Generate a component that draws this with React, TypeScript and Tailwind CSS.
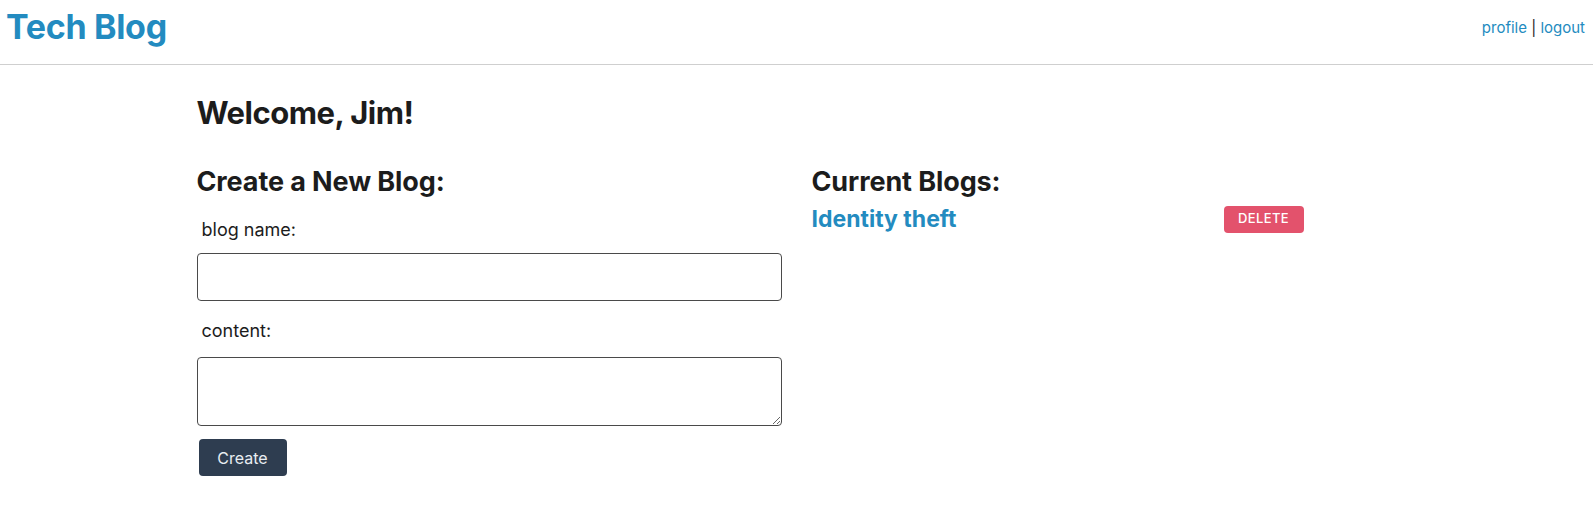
const App = () => {
  return (
    <div className="min-h-screen bg-white text-[#1c1c1c] font-['Inter','Liberation_Sans',sans-serif]">
      <header className="flex h-[65px] items-center justify-between border-b border-[#cfcfcf] px-[6px] pb-[10px]">
        <h1 className="text-[34px] font-bold leading-none tracking-[-0.3px] text-[#238bc0]">Tech Blog</h1>
        <nav className="pr-[2px] text-[15px] leading-none text-[#238bc0]">
          <a href="#">profile</a>
          <span className="text-[#1c1c1c]"> | </span>
          <a href="#">logout</a>
        </nav>
      </header>

      <main className="mx-auto w-[1200px]">
        <h2 className="mt-[29px] text-[31px] font-bold leading-[38px] tracking-[-0.5px]">Welcome, Jim!</h2>

        <div className="mt-[34px] grid grid-cols-2 gap-[30px]">
          {/* new blog form */}
          <section>
            <h3 className="text-[27px] font-bold leading-[32px] tracking-[-0.1px]">Create a New Blog:</h3>
            <form className="flex flex-col">
              <label className="mt-[20px] ml-[5px] text-[18px] leading-[24px]">blog name:</label>
              <input type="text" className="mt-[11px] h-[48px] w-full rounded-[4px] border border-[#4a4a4a] px-2" />
              <label className="mt-[18px] ml-[5px] text-[18px] leading-[24px]">content:</label>
              <textarea className="mt-[14px] h-[69px] w-full rounded-[4px] border border-[#4a4a4a] px-2" />
              <button
                type="button"
                className="mt-[13px] ml-[2px] h-[37px] w-[88px] rounded-[4px] bg-[#2e3d50] text-[16px] text-[#e8edf2]"
              >
                Create
              </button>
            </form>
          </section>

          {/* existing blogs */}
          <section>
            <h3 className="text-[27px] font-bold leading-[32px] tracking-[-0.1px]">Current Blogs:</h3>
            <div className="mt-[7px] flex w-[492px] items-center justify-between">
              <a href="#" className="text-[23px] font-bold leading-[28px] text-[#238bc0]">Identity theft</a>
              <button
                type="button"
                className="h-[27px] w-[80px] rounded-[4px] bg-[#e3526c] text-[13px] font-medium tracking-[0.4px] text-white"
              >
                DELETE
              </button>
            </div>
          </section>
        </div>
      </main>
    </div>
  );
};

export default App;
